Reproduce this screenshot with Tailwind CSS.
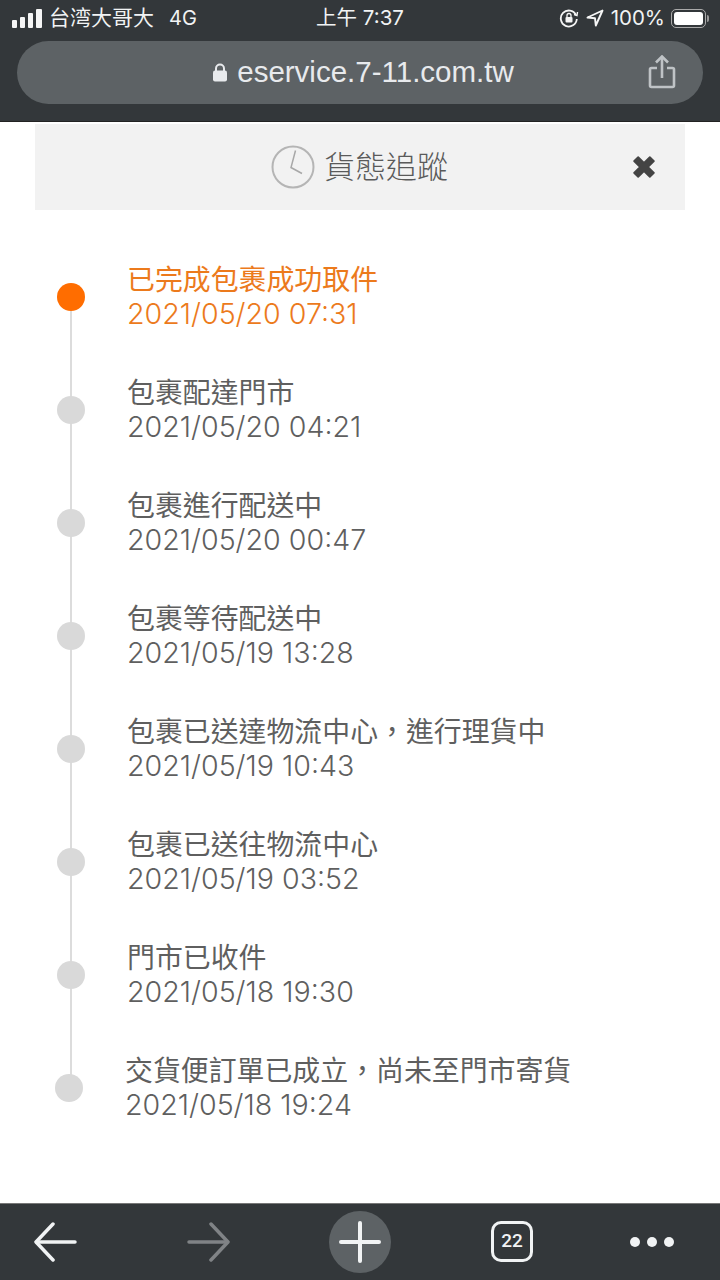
<!DOCTYPE html>
<html lang="zh-Hant">
<head>
    <meta charset="UTF-8">
    <meta name="viewport" content="width=device-width, initial-scale=1.0">
    <title>貨態追蹤</title>
    <script src="https://cdn.jsdelivr.net/npm/@tailwindcss/browser@4"></script>
</head>
<body class="w-[720px] h-[1280px] overflow-hidden bg-white flex flex-col font-['Inter','Noto_Sans_CJK_TC',sans-serif]">
    <!-- Barra de estado y URL -->
    <div class="h-[122px] shrink-0 bg-[#33373a] text-[#f1f3f4] border-b border-[#222]">
        <div class="h-[41px] px-[11px] pb-[5px] flex items-center justify-between">
            <div class="w-[250px] flex items-center">
                <svg width="32" height="19" viewBox="0 0 32 19" fill="#f5f5f5" class="mr-[6px]">
                    <rect x="1" y="11" width="5" height="8" rx="1"/><rect x="9" y="8" width="5" height="11" rx="1"/><rect x="17" y="4" width="5" height="15" rx="1"/><rect x="25" y="0" width="6" height="19" rx="1"/>
                </svg>
                <span class="text-[21px]">台湾大哥大</span>
                <span class="ml-[15px] text-[20px]">4G</span>
            </div>
            <div class="text-[20.5px]">上午 7:37</div>
            <div class="w-[250px] flex items-center justify-end">
                <svg width="20" height="20" viewBox="0 0 20 20" fill="none" stroke="#f5f5f5" stroke-width="1.8" class="mr-[7px]">
                    <path d="M17 7a8 8 0 1 0 .8 4"/><path d="M15 6.5l3 1 .5-3.5" stroke-width="1.4"/><rect x="6.5" y="9" width="7" height="5.5" rx="1" fill="#f5f5f5" stroke="none"/><path d="M8 9V7.5a2 2 0 0 1 4 0V9" stroke-width="1.3"/>
                </svg>
                <svg width="18" height="18" viewBox="0 0 18 18" fill="none" stroke="#f5f5f5" stroke-width="1.9" stroke-linejoin="round" class="mr-[7px]">
                    <path d="M16.5 1.5L1.5 8.5l7.5 .8 .8 7.2z"/>
                </svg>
                <span class="text-[20.5px] mr-[6px]">100%</span>
                <div class="w-[35px] h-[19px] rounded-[5px] border border-[#aaa] p-[2px]">
                    <div class="w-full h-full rounded-[3px] bg-white"></div>
                </div>
                <div class="w-[2px] h-[7px] ml-[1px] rounded-r bg-[#999]"></div>
            </div>
        </div>
        <div class="relative mx-[17px] h-[63px] rounded-full bg-[#5d6265] flex items-center justify-center pl-[6px]">
            <svg width="16" height="19" viewBox="0 0 16 19" class="mr-[9px]">
                <rect x="1" y="7.5" width="14" height="11" rx="2" fill="#e8eaed"/><path d="M4 8V5.5a4 4 0 0 1 8 0V8" fill="none" stroke="#e8eaed" stroke-width="2"/>
            </svg>
            <span class="text-[29.5px] leading-[40px] -mt-[2px] text-[#e8eaed] font-['Liberation_Sans',sans-serif]">eservice.7-11.com.tw</span>
            <svg width="28" height="34" viewBox="0 0 28 34" fill="none" stroke="#bfc3c6" stroke-width="2.6" class="absolute right-[27px] top-[14px]">
                <path d="M9 13H3.5a1.5 1.5 0 0 0-1.5 1.5v16A1.5 1.5 0 0 0 3.5 32h21a1.5 1.5 0 0 0 1.5-1.5v-16a1.5 1.5 0 0 0-1.5-1.5H19"/><path d="M14 23V2"/><path d="M8 7.5l6-6 6 6"/>
            </svg>
        </div>
    </div>

    <!-- Contenido -->
    <div class="flex-1 px-[35px] pt-[2px]">
        <div class="relative h-[86px] bg-[#f2f2f2] flex items-center justify-center text-[#5a5a5a] pr-[2px]">
            <svg width="46" height="46" viewBox="0 0 46 46" fill="none" class="mr-[8px]">
                <circle cx="23" cy="23" r="20.5" stroke="#b5b5b5" stroke-width="2"/><path d="M25.500 6.500L21 23.500l11 6" stroke="#a8a8a8" stroke-width="1.500"/>
            </svg>
            <span class="text-[31px] font-light">貨態追蹤</span>
            <svg width="28" height="28" viewBox="0 0 24 24" class="absolute right-[27px] top-[29px]">
                <path d="M3.500 7L7 3.500l5 5 5-5L20.500 7l-5 5 5 5-3.500 3.500-5-5-5 5L3.500 17l5-5z" fill="#444" stroke="#444" stroke-width="1.500" stroke-linejoin="round"/>
            </svg>
        </div>

        <!-- Línea de tiempo -->
        <div class="relative mt-[31px] text-[27.9px] leading-[34px] text-[#5f5f5f]">
            <div class="absolute left-[35px] top-[56px] w-[2px] h-[791px] bg-[#dcdcdc]"></div>

            <div class="relative h-[113px] pl-[92px] pt-[22px] text-[#ec7a1c]">
                <div class="absolute left-[22px] top-[42px] w-[28px] h-[28px] rounded-full bg-[#ff6d00]"></div>
                <p>已完成包裹成功取件</p>
                <p class="text-[28.6px] font-light">2021/05/20 07:31</p>
            </div>
            <div class="relative h-[113px] pl-[92px] pt-[22px]">
                <div class="absolute left-[22px] top-[42px] w-[28px] h-[28px] rounded-full bg-[#d9d9d9]"></div>
                <p>包裹配達門市</p>
                <p class="text-[28.6px] font-light">2021/05/20 04:21</p>
            </div>
            <div class="relative h-[113px] pl-[92px] pt-[22px]">
                <div class="absolute left-[22px] top-[42px] w-[28px] h-[28px] rounded-full bg-[#d9d9d9]"></div>
                <p>包裹進行配送中</p>
                <p class="text-[28.6px] font-light">2021/05/20 00:47</p>
            </div>
            <div class="relative h-[113px] pl-[92px] pt-[22px]">
                <div class="absolute left-[22px] top-[42px] w-[28px] h-[28px] rounded-full bg-[#d9d9d9]"></div>
                <p>包裹等待配送中</p>
                <p class="text-[28.6px] font-light">2021/05/19 13:28</p>
            </div>
            <div class="relative h-[113px] pl-[92px] pt-[22px]">
                <div class="absolute left-[22px] top-[42px] w-[28px] h-[28px] rounded-full bg-[#d9d9d9]"></div>
                <p>包裹已送達物流中心，進行理貨中</p>
                <p class="text-[28.6px] font-light">2021/05/19 10:43</p>
            </div>
            <div class="relative h-[113px] pl-[92px] pt-[22px]">
                <div class="absolute left-[22px] top-[42px] w-[28px] h-[28px] rounded-full bg-[#d9d9d9]"></div>
                <p>包裹已送往物流中心</p>
                <p class="text-[28.6px] font-light">2021/05/19 03:52</p>
            </div>
            <div class="relative h-[113px] pl-[92px] pt-[22px]">
                <div class="absolute left-[22px] top-[42px] w-[28px] h-[28px] rounded-full bg-[#d9d9d9]"></div>
                <p>門市已收件</p>
                <p class="text-[28.6px] font-light">2021/05/18 19:30</p>
            </div>
            <div class="relative h-[113px] pl-[90px] pt-[22px]">
                <div class="absolute left-[20px] top-[42px] w-[28px] h-[28px] rounded-full bg-[#d9d9d9]"></div>
                <p>交貨便訂單已成立，尚未至門市寄貨</p>
                <p class="text-[28.6px] font-light">2021/05/18 19:24</p>
            </div>
        </div>
    </div>

    <!-- Barra inferior -->
    <div class="relative h-[77px] shrink-0 bg-[#33373a] border-t border-[#777] flex items-center">
        <svg width="44" height="40" viewBox="0 0 44 40" fill="none" stroke="#f1f3f4" stroke-width="3.500" stroke-linecap="round" stroke-linejoin="round" class="absolute left-[34px] top-[18px]">
            <path d="M41 20H3"/><path d="M19 2L2 20l17 18"/>
        </svg>
        <svg width="44" height="40" viewBox="0 0 44 40" fill="none" stroke="#808386" stroke-width="3.500" stroke-linecap="round" stroke-linejoin="round" class="absolute left-[186px] top-[18px]">
            <path d="M3 20h38"/><path d="M25 2l17 18-17 18"/>
        </svg>
        <div class="absolute left-[329px] top-[7px] w-[62px] h-[62px] rounded-full bg-[#5d6265] flex items-center justify-center">
            <svg width="42" height="42" viewBox="0 0 42 42" fill="none" stroke="#f1f3f4" stroke-width="4" stroke-linecap="round">
                <path d="M21 2v38"/><path d="M2 21h38"/>
            </svg>
        </div>
        <div class="absolute left-[491px] top-[17px] w-[42px] h-[41px] rounded-[10px] border-[3.500px] border-[#f1f3f4] flex items-center justify-center text-[19px] font-medium text-[#f1f3f4] font-['Roboto',sans-serif]">22</div>
        <div class="absolute left-[630px] top-[33px] flex gap-[7px]">
            <div class="w-[10px] h-[10px] rounded-full bg-[#f1f3f4]"></div>
            <div class="w-[10px] h-[10px] rounded-full bg-[#f1f3f4]"></div>
            <div class="w-[10px] h-[10px] rounded-full bg-[#f1f3f4]"></div>
        </div>
    </div>
</body>
</html>
